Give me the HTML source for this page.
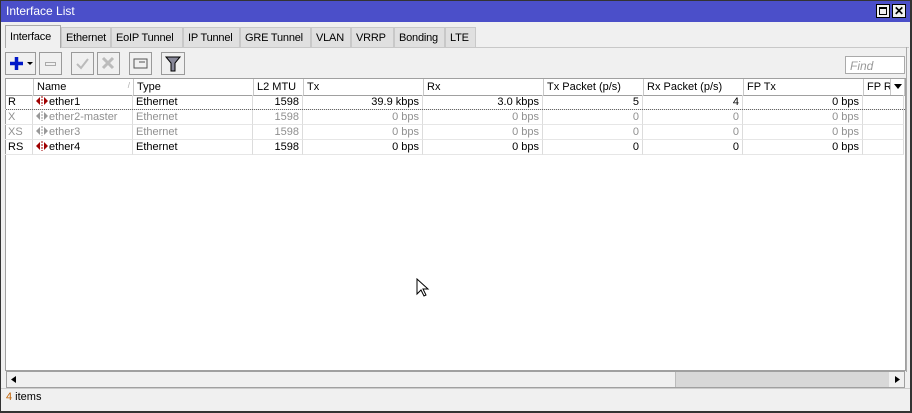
<!DOCTYPE html>
<html><head><meta charset="utf-8"><style>
*{margin:0;padding:0;box-sizing:border-box}
body{width:912px;height:413px;background:#f0f0f0;font-family:"Liberation Sans",sans-serif;font-size:11px;position:relative;overflow:hidden}
.a{position:absolute}
.win{left:0;top:0;width:912px;height:413px;border:1px solid #333;border-right:2px solid #333;border-bottom:2px solid #333}
.title{left:1px;top:1px;width:909px;height:21px;background:#4b4fc9;color:#fff;font-size:12px;padding:3px 5px}
.tab{top:27px;height:20px;background:#e0e0e0;border:1px solid #c8c8c8;border-bottom:none;padding:4px 0 0 4px;font-size:11px;letter-spacing:-0.2px;color:#000;white-space:nowrap;overflow:hidden}
.btn{top:52px;height:23px;border:1px solid #9a9a9a;background:#f0f0f0}
.tbl{left:5px;top:78px;width:901px;height:293px;background:#fff;border:1px solid #a0a0a0}
.hd{top:0;height:17px;border-right:1px solid #c8c8c8;border-bottom:1px solid #a0a0a0;padding:2px 3px;background:#fff}
.c{height:15px;line-height:13px;border-right:1px solid #dcdcdc;border-bottom:1px solid #e6e6e6;padding:1px 3px;white-space:nowrap;overflow:hidden}
.c svg{vertical-align:-1px}
.r{text-align:right}
.g{color:#909090}
</style></head><body>
<div class="a win"></div>
<div class="a title">Interface List</div>
<div class="a" style="left:876px;top:4px;width:14px;height:14px;background:#f0f0f0;border:1px solid #000"><div class="a" style="left:2px;top:2px;width:8px;height:8px;border:1px solid #000;border-top-width:2px"></div></div>
<div class="a" style="left:892px;top:4px;width:14px;height:14px;background:#f0f0f0;border:1px solid #000;font-size:12px;font-weight:bold;line-height:12px;text-align:center">✕</div>

<div class="a" style="left:5px;top:47px;width:904px;height:1px;background:#c8c8c8"></div>
<div class="a tab" style="left:5px;width:56px;top:25px;height:23px;background:#f0f0f0;border-color:#aaa;padding-top:5px">Interface</div>
<div class="a tab" style="left:61px;width:50px">Ethernet</div>
<div class="a tab" style="left:111px;width:72px">EoIP Tunnel</div>
<div class="a tab" style="left:183px;width:57px">IP Tunnel</div>
<div class="a tab" style="left:240px;width:71px">GRE Tunnel</div>
<div class="a tab" style="left:311px;width:40px">VLAN</div>
<div class="a tab" style="left:351px;width:43px">VRRP</div>
<div class="a tab" style="left:394px;width:51px">Bonding</div>
<div class="a tab" style="left:445px;width:31px">LTE</div>
<div class="a" style="left:906px;top:47px;width:1px;height:325px;background:#aaa"></div>

<div class="a btn" style="left:5px;width:31px"><svg width="29" height="21"><path d="M4 10.5h13M10.5 4v13" stroke="#0018c8" stroke-width="3.5"/><path d="M21 9h6l-3 3z" fill="#000"/></svg></div>
<div class="a btn" style="left:39px;width:23px"><div class="a" style="left:5px;top:9px;width:11px;height:4px;border:1px solid #aaa"></div></div>
<div class="a btn" style="left:71px;width:23px"><svg width="21" height="21"><path d="M5 11l4 4 7-9" stroke="#bbb" fill="none" stroke-width="2"/></svg></div>
<div class="a btn" style="left:97px;width:23px"><svg width="21" height="21"><path d="M5 5l10 10M15 5L5 15" stroke="#bbb" stroke-width="3"/></svg></div>
<div class="a btn" style="left:129px;width:23px"><svg width="21" height="21"><rect x="4" y="6" width="13" height="9" fill="none" stroke="#555"/><path d="M9 9h6" stroke="#555"/></svg></div>
<div class="a btn" style="left:161px;width:24px"><svg width="22" height="21"><path d="M4 4h14l-5 6v8h-4v-8z" fill="#889" stroke="#000"/></svg></div>
<div class="a" style="left:845px;top:56px;width:60px;height:18px;background:#fff;border:1px solid #aaa;color:#999;font-style:italic;padding:2px 4px;font-size:12px">Find</div>

<div class="a tbl">
<div class="a hd" style="left:0;width:28px"></div>
<div class="a hd" style="left:28px;width:100px">Name<span style="float:right;color:#aaa;font-size:8px">/</span></div>
<div class="a hd" style="left:128px;width:120px">Type</div>
<div class="a hd" style="left:248px;width:50px">L2 MTU</div>
<div class="a hd" style="left:298px;width:120px">Tx</div>
<div class="a hd" style="left:418px;width:120px">Rx</div>
<div class="a hd" style="left:538px;width:100px">Tx Packet (p/s)</div>
<div class="a hd" style="left:638px;width:100px">Rx Packet (p/s)</div>
<div class="a hd" style="left:738px;width:120px">FP Tx</div>
<div class="a hd" style="left:858px;width:41px;overflow:hidden;white-space:nowrap">FP R<span class="a" style="left:26px;top:0;width:15px;height:16px;background:#fff;border-left:1px solid #c8c8c8"><svg width="14" height="14"><path d="M3 5h8l-4 5z"/></svg></span></div>
</div>
<div class="a" style="left:6px;top:95px;width:899px" id="rows"></div>
<div class="a" style="left:6px;top:109px;width:899px;border-top:1px dotted #666"></div>

<svg class="a" style="left:416px;top:278px" width="14" height="20"><path d="M1 1v15l4-4 3 6 2-1-3-6h5z" fill="#fff" stroke="#000"/></svg>

<div class="a" style="left:6px;top:371px;width:899px;height:17px;background:#f0f0f0;border:1px solid #a0a0a0">
<div class="a" style="left:668px;top:0;width:214px;height:15px;background:#d8d8d8;border-left:1px solid #bbb"></div>
<div class="a" style="left:4px;top:4px;width:5px;height:7px;background:#000;clip-path:polygon(0 50%,100% 0,100% 100%)"></div>
<div class="a" style="left:888px;top:4px;width:5px;height:7px;background:#000;clip-path:polygon(0 0,100% 50%,0 100%)"></div>
</div>
<div class="a" style="left:6px;top:391px;font-size:11px"><span style="color:#c06000">4</span> items</div>
<div class="a" style="left:1px;top:388px;width:909px;height:1px;background:#ccc"></div>

<script>
var rows=[["R","ether1","39.9 kbps","3.0 kbps","5","4",0],["X","ether2-master","0 bps","0 bps","0","0",1],["XS","ether3","0 bps","0 bps","0","0",1],["RS","ether4","0 bps","0 bps","0","0",0]];
var h="";
rows.forEach(function(r,i){
var g=r[6]?" g":"",t=i*15,ic=r[6]?"#999":"#a00000";
var icon='<svg width="13" height="10"><path d="M0 5l4-4v8z M12 5l-4-4v8z" fill="'+ic+'"/><path d="M6 0v10" stroke="'+ic+'" stroke-dasharray="2 1"/></svg>';
var cells=[[0,28,r[0],""],[28,100,icon+r[1],""],[128,120,"Ethernet",""],[248,50,"1598"," r"],[298,120,r[2]," r"],[418,120,r[3]," r"],[538,100,r[4]," r"],[638,100,r[5]," r"],[738,120,"0 bps"," r"],[858,41,"",""]];
cells.forEach(function(c){h+='<div class="a c'+c[3]+g+'" style="left:'+(c[0]-1)+'px;top:'+t+'px;width:'+c[1]+'px">'+c[2]+'</div>';});
});
document.getElementById("rows").innerHTML=h;
</script>
</body></html>
